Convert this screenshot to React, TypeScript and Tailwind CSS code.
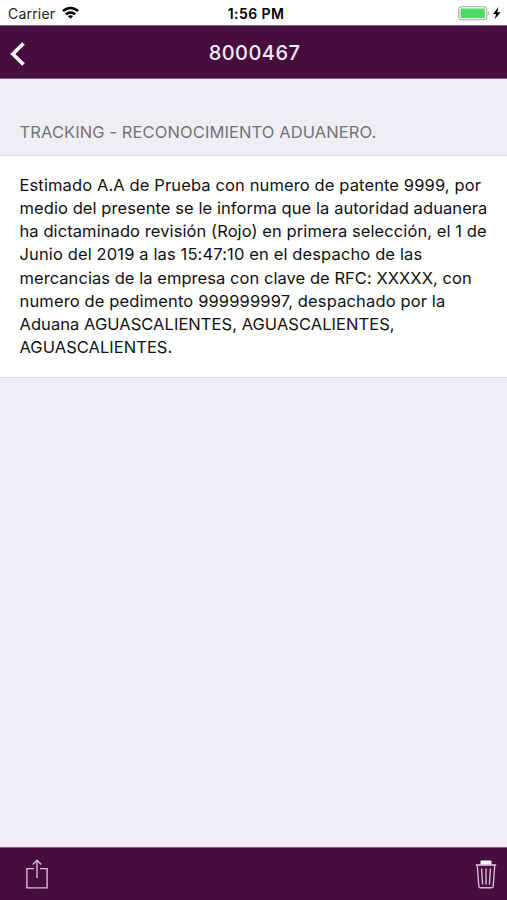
const lines = [
  {
    text: "Estimado A.A de Prueba con numero de patente 9999, por",
    tracking: "tracking-[0.12px]",
  },
  {
    text: "medio del presente se le informa que la autoridad aduanera",
    tracking: "tracking-[0.075px]",
  },
  {
    text: "ha dictaminado revisión (Rojo) en primera selección, el 1 de",
    tracking: "tracking-[0.085px]",
  },
  {
    text: "Junio del 2019 a las 15:47:10 en el despacho de las",
    tracking: "tracking-[0.13px]",
  },
  {
    text: "mercancias de la empresa con clave de RFC: XXXXX, con",
    tracking: "tracking-[0.05px]",
  },
  {
    text: "numero de pedimento 999999997, despachado por la",
    tracking: "tracking-[0.14px]",
  },
  {
    text: "Aduana AGUASCALIENTES, AGUASCALIENTES,",
    tracking: "tracking-[0.05px]",
  },
  {
    text: "AGUASCALIENTES.",
    tracking: "tracking-[0.04px]",
  },
];

const StatusBar = () => {
  return (
    <div className="grid h-[25px] grid-cols-3 items-center bg-white pt-[3px] text-black">
      <div className="flex items-center gap-[7px] pl-2">
        <span className="text-[14px] leading-5 tracking-[0.2px] text-[#222]">
          Carrier
        </span>
        <svg width="17" height="13" viewBox="0 0 17 13" className="-mt-[3px]" fill="none" stroke="#000" strokeWidth="2.5">
          <path d="M1 5.2C5.2 1 11.8 1 16 5.2" />
          <path d="M3.8 8.4c2.6-2.6 6.8-2.6 9.4 0" />
          <path d="M8.5 12.8 5.8 10.1c1.4-1.3 4-1.3 5.4 0z" fill="#000" stroke="none" />
        </svg>
      </div>
      <div className="pl-[5px] text-center text-[14px] leading-5 font-semibold tracking-[0.4px]">
        1:56 PM
      </div>
      <div className="flex items-center justify-end pr-[6px]">
        <svg width="43" height="15" viewBox="0 0 43 15" className="-mt-px">
          <rect x="0.75" y="0.75" width="28" height="13" rx="3.2" fill="#fff" stroke="#a9a9a9" strokeWidth="1.2" />
          <rect x="2.6" y="2.6" width="24.3" height="9.3" rx="1" fill="#4cd964" />
          <path d="M30.2 5.2c1.6.3 1.6 3.9 0 4.2z" fill="#a9a9a9" />
          <path d="M40.5 1 35 8.1h3L36.7 13.3 42.5 6.2h-3.2z" fill="#000" />
        </svg>
      </div>
    </div>
  );
};

const NavBar = () => {
  return (
    <header className="grid h-[54px] grid-cols-3 items-center border-y border-t-[#846080] border-b-[#846080] bg-[#450e3f]">
      <button className="pt-[3px] pl-[9px]" aria-label="Back">
        <svg width="17" height="24" viewBox="0 0 17 24" fill="none" stroke="#fff" strokeWidth="3.6">
          <path d="M14.5 1.5 3.8 12l10.7 10.5" />
        </svg>
      </button>
      <h1 className="pt-px pl-[2px] text-center text-[20px] leading-6 font-medium tracking-[0.45px] text-[#f4eaf4]">
        8000467
      </h1>
    </header>
  );
};

const Toolbar = () => {
  return (
    <footer className="flex h-[53px] items-center justify-between border-t border-t-[#846080] bg-[#450e3f] pr-[10px] pl-[26px]">
      <button aria-label="Share">
        <svg width="22" height="30" viewBox="0 0 22 30" fill="none" stroke="#d9b9d8" strokeWidth="1.4">
          <path d="M8 9.6H.9v19.3h20.2V9.6H14" />
          <path d="M11 19V1.5M6.8 5.5 11 1.3l4.2 4.2" />
        </svg>
      </button>
      <button aria-label="Delete">
        <svg width="22" height="29" viewBox="0 0 22 29" fill="none" stroke="#d9b9d8" strokeWidth="1.4">
          <path d="M6 1h10v3.5H6z" fill="#fff" stroke="#fff" strokeWidth="1" />
          <path d="M.8 5h20.4" strokeWidth="1.7" />
          <path d="M2.3 5.5 3.8 26.2q.1 1.6 1.6 1.6h11.2q1.5 0 1.6-1.6L19.7 5.5" />
          <path d="M6.6 8.5 7.6 24.5M11 8.5v16M15.4 8.5l-1 16" />
        </svg>
      </button>
    </footer>
  );
};

export default function App() {
  return (
    <div className="flex h-screen flex-col bg-[#efeef4] font-[Inter,sans-serif]">
      <StatusBar />
      <NavBar />
      <main className="flex-1">
        <h2 className="flex h-[76px] items-end px-[19.5px] pb-[11px] text-[16.5px] leading-6 tracking-[0.1px] whitespace-nowrap text-[#75747a]">
          TRACKING - RECONOCIMIENTO ADUANERO.
        </h2>
        <div className="h-[223px] border-y border-[#dddce1] bg-white px-[19.5px] pt-[17.5px] text-[16.5px] leading-[23.25px] whitespace-nowrap text-[#111]">
          {lines.map((line) => (
            <p key={line.text} className={line.tracking}>
              {line.text}
            </p>
          ))}
        </div>
      </main>
      <Toolbar />
    </div>
  );
}
